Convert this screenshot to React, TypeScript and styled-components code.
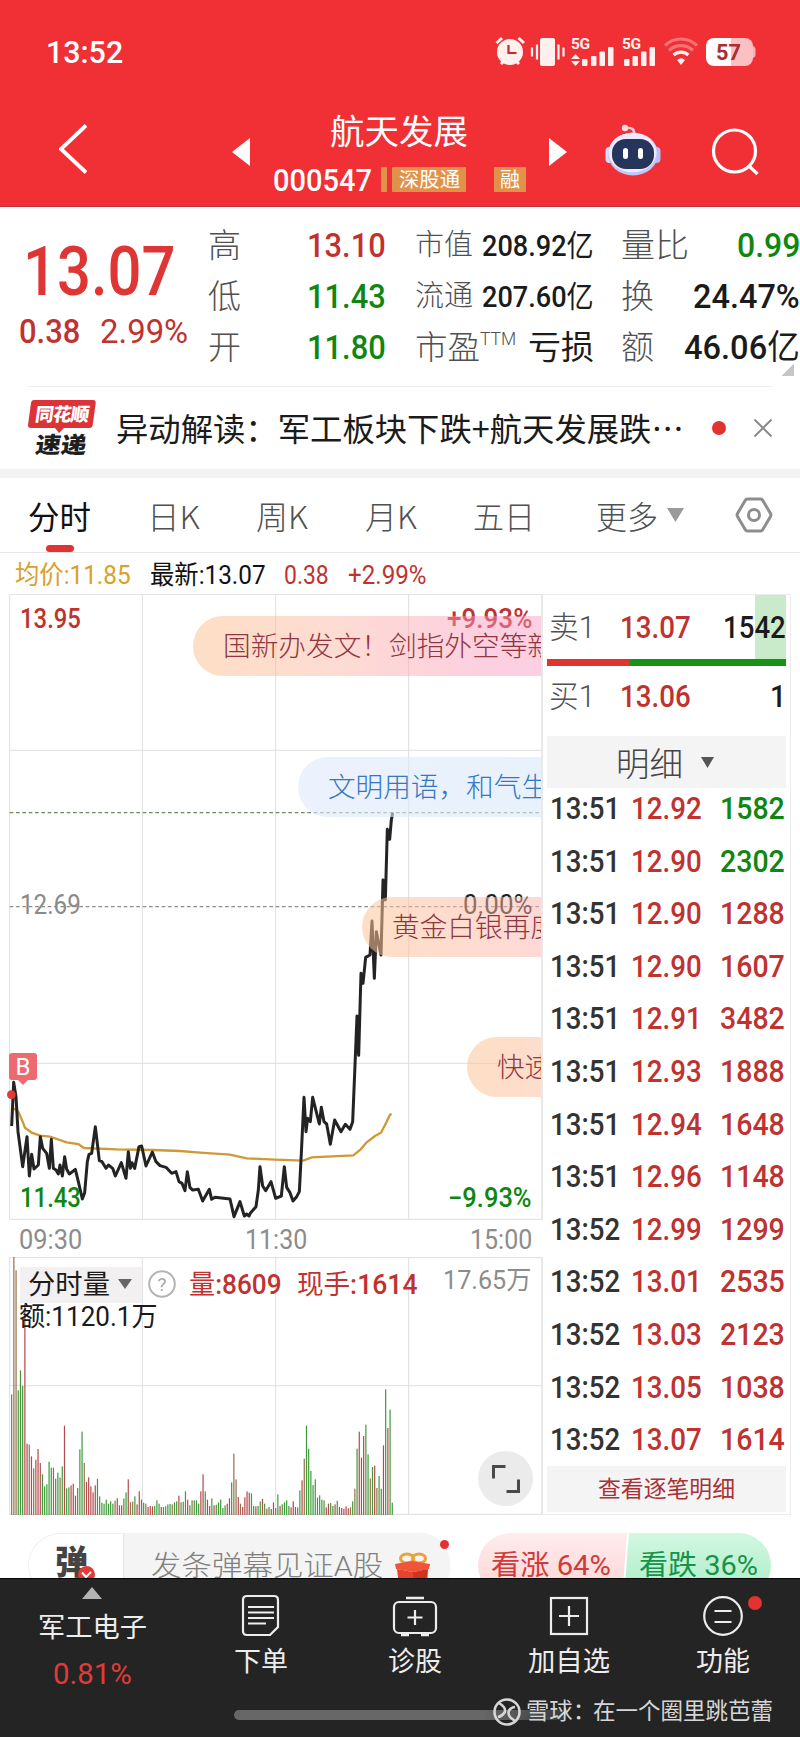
import React, { useLayoutEffect, useRef } from "react";
import styled, { createGlobalStyle } from "styled-components";

const RED = "#c0322f";
const GREEN = "#0f860f";
const INK = "#1b1b1b";
const LABEL = "#505050";
const GRID = "#dedede";

const GlobalStyle = createGlobalStyle`
  * {
    box-sizing: border-box;
  }
  body {
    margin: 0;
    background: #fff;
    font-family: Roboto, "Noto Sans CJK SC", sans-serif;
  }
  svg {
    display: block;
    flex: none;
  }
`;

const TextSlot = styled.span<{
  $width: number;
  $size: number;
  $color?: string;
  $weight?: number;
  $left?: number;
}>`
  display: flex;
  flex: none;
  align-items: center;
  width: ${(p) => p.$width}px;
  height: ${(p) => Math.round(p.$size * 1.2)}px;
  margin-left: ${(p) => p.$left ?? 0}px;
  font-size: ${(p) => p.$size}px;
  font-weight: ${(p) => p.$weight ?? 400};
  line-height: 1.2;
  color: ${(p) => p.$color ?? "inherit"};
`;

const TextInk = styled.span`
  flex: none;
  white-space: pre;
  transform-origin: 0 50%;
`;

const Han = styled.span`
  font-weight: 400;
`;

interface FitProps {
  w: number;
  size: number;
  color?: string;
  weight?: number;
  left?: number;
  children: React.ReactNode;
}

const Fit: React.FC<FitProps> = ({ w, size, color, weight, left, children }) => {
  const ref = useRef<HTMLSpanElement>(null);

  useLayoutEffect(() => {
    const el = ref.current;
    if (el && el.offsetWidth) {
      el.style.transform = `scaleX(${w / el.offsetWidth})`;
    }
  }, [w, size, children]);

  return (
    <TextSlot $width={w} $size={size} $color={color} $weight={weight} $left={left}>
      <TextInk ref={ref}>{children}</TextInk>
    </TextSlot>
  );
};

/* ---------- layout ---------- */

const Page = styled.main`
  width: 800px;
  height: 1737px;
  overflow: hidden;
  background: #fff;
`;

const Header = styled.header`
  height: 207px;
  background: #f03035;
  border-bottom: 1px solid #c23338;
  color: #fff;
`;

const StatusBar = styled.div`
  display: flex;
  align-items: center;
  height: 104px;
  padding-left: 46px;
`;

const StatusIcons = styled.div`
  margin: -2px 0 0 372px;
`;

const NavBar = styled.div`
  display: flex;
  height: 102px;
`;

const TitleBlock = styled.div`
  width: 276px;
  margin-left: 24px;
`;

const TitleLine = styled.div`
  display: flex;
  height: 54px;
  align-items: center;
  padding: 2px 0 0 55px;
`;

const CodeLine = styled.div`
  display: flex;
  height: 45px;
  margin-top: -1px;
  align-items: flex-start;
`;

const CodeText = styled.div`
  margin-top: 4px;
`;

const Tag = styled.span<{ $width: number; $left: number }>`
  display: flex;
  justify-content: center;
  align-items: center;
  width: ${(p) => p.$width}px;
  height: 25px;
  margin: 10px 0 0 ${(p) => p.$left}px;
  border-radius: 1px;
  background: #e0924b;
`;

const Quote = styled.section`
  display: flex;
  height: 179px;
`;

const LastPrice = styled.div`
  width: 208px;
  padding: 25px 0 0 20px;
  flex: none;
`;

const LastPriceRow = styled.div<{ $left: number; $height: number }>`
  display: flex;
  align-items: center;
  height: ${(p) => p.$height}px;
  padding-left: ${(p) => p.$left}px;
`;

const QuoteColumn = styled.div<{ $width: number }>`
  width: ${(p) => p.$width}px;
  flex: none;
  padding-top: 13px;
`;

const QuoteRow = styled.div`
  display: flex;
  justify-content: space-between;
  align-items: center;
  height: 51px;
  color: ${LABEL};
`;

const LabelGroup = styled.span`
  display: flex;
  align-items: flex-start;
`;

const Expand = styled.i`
  align-self: flex-end;
  flex: none;
  width: 13px;
  height: 13px;
  margin: 0 0 10px -19px;
  background: linear-gradient(135deg, transparent 50%, #c6c6c6 50%);
`;

const News = styled.section`
  display: flex;
  align-items: center;
  height: 91px;
  border-bottom: 9px solid #f3f3f3;
  color: ${INK};
`;

const Rule = styled.hr`
  width: 744px;
  height: 1px;
  margin: 0 0 0 28px;
  border: 0;
  background: #ececec;
`;

const NewsText = styled.div`
  margin: -2px 0 0 19px;
  font-family: "Noto Sans CJK SC", sans-serif;
`;

const Dot = styled.i<{ $size: number; $left?: number }>`
  flex: none;
  width: ${(p) => p.$size}px;
  height: ${(p) => p.$size}px;
  margin-left: ${(p) => p.$left ?? 0}px;
  border-radius: 50%;
  background: #e23330;
`;

const Tabs = styled.nav`
  display: flex;
  height: 75px;
  border-bottom: 1px solid #e6e6e6;
  color: ${LABEL};
  font-family: "Noto Sans CJK SC", sans-serif;
`;

const Tab = styled.div<{ $left: number; $active?: boolean }>`
  display: flex;
  flex-direction: column;
  align-items: center;
  justify-content: space-between;
  height: 74px;
  padding-top: 18px;
  margin-left: ${(p) => p.$left}px;

  &::after {
    content: "";
    width: 28px;
    height: 7px;
    border-radius: 4px;
    background: ${(p) => (p.$active ? "#e23330" : "transparent")};
  }
`;

const TabIcon = styled.div<{ $left: number; $top: number }>`
  margin: ${(p) => p.$top}px 0 0 ${(p) => p.$left}px;
`;

const Summary = styled.div`
  display: flex;
  align-items: center;
  width: 542px;
  height: 41px;
  padding: 5px 0 0 15px;
`;

const Market = styled.section`
  display: flex;
  height: 921px;
`;

const Charts = styled.div`
  width: 543px;
  flex: none;
`;

const Plot = styled.div<{ $height: number }>`
  position: relative;
  height: ${(p) => p.$height}px;
  overflow: hidden;
`;

const PlotSvg = styled.svg`
  position: absolute;
  inset: 0;
  width: 543px;
  height: 100%;
`;

const PlotLabels = styled.div`
  position: relative;
  display: flex;
  flex-direction: column;
  justify-content: space-between;
  height: 100%;
  padding: 9px 11px 6px 20px;
`;

const LabelRow = styled.div<{ $raise?: number }>`
  display: flex;
  justify-content: space-between;
  margin-top: -${(p) => p.$raise ?? 0}px;
`;

const Danmaku = styled.div<{ $x: number; $y: number; $tone?: "blue" }>`
  position: absolute;
  left: ${(p) => p.$x}px;
  top: ${(p) => p.$y}px;
  display: flex;
  align-items: center;
  width: 460px;
  height: 60px;
  padding: 2px 0 0 30px;
  border-radius: 30px;
  color: ${(p) => (p.$tone ? "#3577c0" : "#8f3640")};
  background: ${(p) =>
    p.$tone
      ? "linear-gradient(90deg, rgba(222, 233, 250, 0.6), rgba(210, 232, 250, 0.6))"
      : "linear-gradient(90deg, rgba(252, 196, 150, 0.55), rgba(252, 184, 166, 0.5) 30%, rgba(250, 150, 190, 0.46) 65%)"};
`;

const PlotEdge = styled.i`
  position: absolute;
  top: 0;
  right: 0;
  width: 2px;
  height: 100%;
  background: #e8e8e8;
`;

const BuyMark = styled.div`
  position: absolute;
  left: 9px;
  top: 459px;
  width: 28px;
  height: 27px;
  border-radius: 3px;
  background: #ec6a70;
  color: #fff;
  font-size: 24px;
  line-height: 28px;
  text-align: center;

  &::after {
    content: "";
    position: absolute;
    left: 9px;
    top: 27px;
    border: 5px solid transparent;
    border-top-color: #ec6a70;
  }
`;

const TimeAxis = styled.div`
  display: flex;
  justify-content: space-between;
  align-items: center;
  height: 37px;
  padding: 3px 11px 0 19px;
`;

const VolumeHead = styled.div`
  position: relative;
  display: flex;
  align-items: center;
  height: 36px;
  margin: 10px 0 0 20px;
`;

const VolumeMax = styled.div`
  margin: -8px 0 0 25px;
`;

const VolumeSelect = styled.div`
  display: flex;
  align-items: center;
  width: 122px;
  height: 36px;
  padding-left: 8px;
  background: rgba(241, 239, 239, 0.94);
`;

const VolumeAmount = styled.div`
  position: relative;
  margin: -2px 0 0 19px;
`;

const FullScreen = styled.div`
  position: absolute;
  left: 478px;
  top: 194px;
  display: flex;
  align-items: center;
  justify-content: center;
  width: 55px;
  height: 55px;
  border-radius: 50%;
  background: #ebebeb;
`;

const Book = styled.aside`
  width: 248px;
  height: 921px;
  padding-left: 4px;
  border: 1px solid #ececec;
  border-left: 0;
`;

const BookRow = styled.div<{ $height: number; $depth?: number }>`
  display: flex;
  align-items: center;
  width: 239px;
  height: ${(p) => p.$height}px;
  padding: 1px 0 0 2px;
  color: ${LABEL};
  background: linear-gradient(#c9ebc9, #c9ebc9) right / ${(p) => p.$depth ?? 0}px 100%
    no-repeat;
`;

const PushRight = styled.div`
  margin-left: auto;
`;

const RatioBar = styled.div`
  width: 239px;
  height: 7px;
  background: linear-gradient(90deg, #df3530 83px, #169316 83px);
`;

const TicksHead = styled.div`
  display: flex;
  align-items: center;
  width: 239px;
  height: 52px;
  margin-top: 10px;
  padding: 5px 0 0 69px;
  background: #f4f4f4;
`;

const Tick = styled.div`
  display: flex;
  align-items: center;
  width: 238px;
  height: 52.6px;
  padding-left: 3px;
`;

const Ticks = styled.div`
  margin-top: -6px;
`;

const TicksMore = styled.div`
  display: flex;
  align-items: center;
  justify-content: center;
  width: 239px;
  height: 46px;
  padding-top: 2px;
  background: #f4f4f5;
`;

const CommentBar = styled.div`
  display: flex;
  height: 63px;
  padding: 18px 0 0 28px;
  overflow: hidden;
`;

const DanmakuToggle = styled.div`
  position: relative;
  width: 96px;
  height: 65px;
  padding: 9px 0 0 26px;
  border: 1px solid #f0f0f0;
  border-right-color: #e6e6e6;
  border-radius: 33px 0 0 33px;
  flex: none;
`;

const ToggleBadge = styled.div`
  position: absolute;
  left: 49px;
  top: 32px;
`;

const CommentInput = styled.div`
  position: relative;
  display: flex;
  flex: none;
  width: 326px;
  height: 65px;
  padding: 17px 0 0 27px;
  border-radius: 0 30px 30px 0;
  background: #f4f4f4;
`;

const Gift = styled.div`
  margin: 2px 0 0 11px;
`;

const InputDot = styled.div`
  position: absolute;
  right: 1px;
  top: 7px;
`;

const Vote = styled.div<{ $up?: boolean }>`
  display: flex;
  flex: none;
  width: ${(p) => (p.$up ? 149 : 147)}px;
  height: 65px;
  padding: 16px 0 0 ${(p) => (p.$up ? 13 : 15)}px;
  margin-left: ${(p) => (p.$up ? 28 : -3)}px;
  border-radius: ${(p) => (p.$up ? "33px 0 0 33px" : "0 33px 33px 0")};
  clip-path: ${(p) =>
    p.$up
      ? "polygon(0 0, 100% 0, calc(100% - 5px) 100%, 0 100%)"
      : "polygon(5px 0, 100% 0, 100% 100%, 0 100%)"};
  background: ${(p) =>
    p.$up
      ? "linear-gradient(#feecec, #fcd3d3)"
      : "linear-gradient(#d2f7e1, #a9eec6)"};
`;

const BottomNav = styled.footer`
  height: 159px;
  border-top: 1px solid #050505;
  background: #242424;
  color: #ededed;
`;

const NavItems = styled.div`
  display: flex;
  height: 119px;
`;

const Sector = styled.div`
  display: flex;
  flex-direction: column;
  align-items: center;
  width: 184px;
  padding-top: 8px;
  flex: none;
`;

const SectorText = styled.div<{ $top: number }>`
  margin-top: ${(p) => p.$top}px;
`;

const NavItem = styled.div`
  position: relative;
  display: flex;
  flex-direction: column;
  align-items: center;
  width: 154px;
  padding-top: 15px;
  flex: none;
`;

const NavLabel = styled.div`
  margin-top: 8px;
`;

const NavDot = styled.div`
  position: absolute;
  left: 102px;
  top: 17px;
`;

const HomeRow = styled.div`
  display: flex;
  align-items: center;
  height: 30px;
  padding: 4px 0 0 234px;
`;

const HomeBar = styled.i`
  width: 332px;
  height: 10px;
  flex: none;
  border-radius: 5px;
  background: linear-gradient(90deg, #676767 75%, #3a3a3a);
`;

const Watermark = styled.div`
  display: flex;
  align-items: center;
  margin: -9px 0 0 -73px;
  padding-top: 3px;
  color: #d6d6d6;
`;

/* ---------- data ---------- */

const ticks: [string, string, string, boolean?][] = [
  ["13:51", "12.92", "1582", true],
  ["13:51", "12.90", "2302", true],
  ["13:51", "12.90", "1288"],
  ["13:51", "12.90", "1607"],
  ["13:51", "12.91", "3482"],
  ["13:51", "12.93", "1888"],
  ["13:51", "12.94", "1648"],
  ["13:51", "12.96", "1148"],
  ["13:52", "12.99", "1299"],
  ["13:52", "13.01", "2535"],
  ["13:52", "13.03", "2123"],
  ["13:52", "13.05", "1038"],
  ["13:52", "13.07", "1614"],
];

const priceLine =
  "35,918 41,787 48,830 54,935 68,1040 81,950 88,1068 95,1003 102,1047 115,1035 121,950 128,985 140,1000 148,1045 154,958 160,1045 168,1050 175,1062 180,1035 187,1068 194,1010 200,1048 208,1062 226,1048 235,1085 247,1137 254,1118 262,1025 267,1003 275,1000 286,920 298,1022 306,1025 318,1045 325,1035 338,1045 346,1068 364,1028 378,1075 385,995 391,1045 396,1028 404,1045 417,980 425,978 438,1038 457,996 468,1025 480,1037 498,1042 515,1060 528,1055 537,1085 546,1090 555,1112 562,1055 570,1103 578,1110 595,1108 608,1143 628,1108 635,1138 645,1132 690,1137 702,1190 720,1145 733,1188 740,1182 747,1188 752,1178 768,1160 775,1110 780,1040 788,1098 797,1112 813,1085 827,1135 844,1128 853,1040 860,1102 870,1118 879,1143 890,1130 898,1115 904,1000 912,832 918,935 923,895 931,905 938,832 958,912 964,862 972,905 980,912 991,973 1004,900 1023,935 1036,913 1050,928 1058,905 1064,760 1071,588 1076,706 1083,460 1089,490 1097,412 1110,405 1116,303 1123,475 1129,335 1143,405 1149,180 1156,240 1162,28 1169,58 1174,0 1178,-22";

const averageLine =
  "41,865 55,875 68,905 75,923 95,938 120,947 150,950 200,967 235,972 252,984 350,988 460,990 540,993 600,998 690,1004 740,1015 826,1019 910,1022 935,1012 980,1010 1060,1006 1082,988 1100,967 1125,948 1143,938 1160,905 1170,884 1175,882";

const volumeBase = 824;
const volumeTops = [
  462, 50, 90, 450, 390, 437, 190, 610, 613, 648, 684, 658, 626, 668, 702, 738,
  732, 664, 682, 682, 715, 697, 712, 678, 556, 744, 741, 735, 730, 766, 743, 627,
  574, 668, 725, 711, 738, 756, 735, 715, 768, 787, 790, 778, 790, 783, 790, 781,
  774, 795, 795, 774, 756, 717, 786, 784, 768, 792, 753, 778, 787, 790, 800, 797,
  798, 797, 780, 790, 800, 800, 798, 792, 791, 792, 786, 783, 766, 786, 784, 753,
  778, 795, 780, 780, 780, 790, 753, 702, 753, 778, 797, 774, 795, 793, 786, 778,
  803, 795, 790, 774, 726, 640, 717, 770, 790, 800, 771, 753, 757, 759, 797, 798,
  797, 783, 776, 790, 805, 800, 806, 786, 803, 762, 797, 792, 786, 780, 797, 801,
  783, 800, 801, 750, 720, 655, 556, 625, 692, 734, 717, 772, 765, 778, 780, 801,
  790, 788, 797, 792, 781, 800, 803, 805, 798, 804, 801, 783, 745, 625, 574, 652,
  587, 553, 642, 714, 680, 676, 743, 707, 745, 615, 447, 563, 508, 787,
];
// r = up, g = down, b = flat
const volumeTones =
  "bbbgggrrbrbrrrgggggbggbgrggrrrggg" +
  "brrrrrggggggggbrrrggrbbgrrggbrrrgggrggggbggrgbgrgbgggrrgrrgrggg" +
  "ggrrgbbrbrrrrggrggrgrgrrggrggggrrrbgrbgggggggggrrggrgrrrrrbgbgrrrggbgrbggrgr";
const toneColor: Record<string, string> = {
  r: "#b5494b",
  g: "#3f9a3a",
  b: "#94704a",
};

/* ---------- icons ---------- */

const SystemIcons = () => (
  <svg width="262" height="32" viewBox="0 0 262 32" fill="#fff0ee">
    <g>
      <circle cx="15" cy="17" r="13" />
      <path
        d="M1.500 8 7 3M29 8 23.500 3M6 29l4-4M24 29l-4-4"
        stroke="#fff0ee"
        strokeWidth="3"
      />
      <path d="M13.500 10v8h8" fill="none" stroke="#c4282c" strokeWidth="2.200" />
    </g>
    <g>
      <rect x="45" y="3" width="15" height="28" rx="2" />
      <path
        d="M42 9.500v15M37 12.500v9M63.500 9.500v15M68.500 12.500v9"
        stroke="#fff0ee"
        strokeWidth="2.200"
      />
    </g>
    <g>
      <text x="76" y="13.500" fontSize="15.500" fontWeight="700" textLength="19">
        5G
      </text>
      <path d="M80.500 19l4.500 5h-9zM80.500 31l4.500-5h-9z" />
      <rect x="87" y="24" width="5.500" height="7" rx="1" />
      <rect x="96" y="21" width="5.500" height="10" rx="1" />
      <rect x="104.500" y="16.500" width="5.500" height="14.500" rx="1" />
      <rect x="113" y="12" width="5.500" height="19" rx="1" />
    </g>
    <g>
      <text x="127" y="13.500" fontSize="15.500" fontWeight="700" textLength="19">
        5G
      </text>
      <rect x="129" y="24" width="5.500" height="7" rx="1" />
      <rect x="137.500" y="21" width="5.500" height="10" rx="1" />
      <rect x="146" y="16.500" width="5.500" height="14.500" rx="1" />
      <rect x="154.500" y="12" width="5.500" height="19" rx="1" />
    </g>
    <g fill="none" stroke="#fff0ee" strokeWidth="3.200">
      <path d="M170 10.500a23 23 0 0 1 32 0" opacity="0.350" />
      <path d="M174 15.500a17 17 0 0 1 24 0" opacity="0.350" />
      <path d="M178.500 20a11 11 0 0 1 15 0" />
      <path d="M182 25q4-3.500 8 0l-4 5z" fill="#fff0ee" stroke="none" />
    </g>
    <g>
      <path d="M219 3h17v28h-17a8 8 0 0 1-8-8V11a8 8 0 0 1 8-8z" fill="#fff" />
      <path d="M236 3h14a8 8 0 0 1 8 8v12a8 8 0 0 1-8 8h-14z" fill="#fdc0c2" />
      <path d="M258 11q2.500 1 2.500 3v6q0 2-2.500 3z" fill="#fdb0b3" />
      <text
        x="221"
        y="25"
        fontSize="22"
        fontWeight="700"
        fill="#a82f33"
        textLength="25"
        lengthAdjust="spacingAndGlyphs"
      >
        57
      </text>
    </g>
  </svg>
);

const Robot = () => (
  <svg width="56" height="54" viewBox="0 0 56 54">
    <path d="M21 5q9-1 8 6" fill="none" stroke="#f6c9d8" strokeWidth="2.500" />
    <circle cx="20" cy="5" r="3.200" fill="#fbdbe0" />
    <rect x="0.500" y="24" width="8" height="16" rx="4" fill="#d8dcff" />
    <rect x="47.500" y="24" width="8" height="16" rx="4" fill="#b9bff6" />
    <ellipse cx="28" cy="31" rx="25" ry="21.500" fill="#c3c6fa" />
    <ellipse cx="27.500" cy="29.500" rx="24" ry="19.800" fill="#efeaff" />
    <rect x="7" y="16" width="42" height="30" rx="14" fill="#26355c" />
    <rect x="18" y="25" width="5" height="11" rx="2.500" fill="#fff" />
    <rect x="33" y="25" width="5" height="11" rx="2.500" fill="#fff" />
  </svg>
);

const NavGlyphs = () => (
  <>
    <TabIcon $left={59} $top={20}>
      <svg width="28" height="50" viewBox="0 0 28 50" fill="none">
        <path d="M27 1.500 2 25l25 23.500" stroke="#fff" strokeWidth="3.800" />
      </svg>
    </TabIcon>
    <TabIcon $left={145} $top={34}>
      <svg width="19" height="28" viewBox="0 0 19 28" fill="#fff">
        <path d="M0 14 18 0v28z" />
      </svg>
    </TabIcon>
  </>
);

const NewsLogo = () => (
  <svg width="69" height="56" viewBox="0 0 69 56">
    <path
      d="M6 0h59q3 0 2.700 3l-3 22q-.500 3-3.500 3H36l-5 5-4-5H3q-3.500 0-3-3L3 3q.500-3 3-3z"
      fill="#dc3338"
    />
    <g
      fontFamily="Noto Sans CJK SC"
      fontWeight="900"
      fontSize="18.500"
      transform="skewX(-8)"
    >
      <text x="9.500" y="21" fill="#fff" textLength="54">
        同花顺
      </text>
      <text
        x="14"
        y="53"
        fontSize="22.500"
        fill="#1f1f1f"
        textLength="51"
        lengthAdjust="spacingAndGlyphs"
      >
        速递
      </text>
    </g>
  </svg>
);

const GiftIcon = () => (
  <svg width="38" height="34" viewBox="0 0 38 34">
    <g fill="none" stroke="#eca23a" strokeWidth="3">
      <ellipse cx="13" cy="6.500" rx="6.500" ry="4.500" />
      <ellipse cx="25" cy="6.500" rx="6.500" ry="4.500" />
    </g>
    <path d="M1 12 18 9l18 3-1 5-16 3-17-3z" fill="#f0553a" />
    <path d="M3 17l16 3v14H5z" fill="#e8432c" />
    <path d="M19 20l15-3-1 17H19z" fill="#d5331f" />
  </svg>
);

const OrderIcon = () => (
  <svg width="40" height="44" viewBox="0 0 40 44" fill="none" stroke="#ededed" strokeWidth="2.200">
    <path d="M6 2h27q4 0 4 4v27l-8 8H6q-4 0-4-4V6q0-4 4-4z" />
    <path d="M7 13h26M7 18.500h26M7 24h26M7 29.500h18" strokeWidth="1.900" />
  </svg>
);

const DiagnoseIcon = () => (
  <svg width="46" height="44" viewBox="0 0 46 44" fill="none" stroke="#ededed" strokeWidth="2.200">
    <path d="M14 4h18M9 41h8M29 41h8" strokeWidth="2.600" />
    <rect x="2" y="8" width="42" height="31" rx="5" />
    <path d="M23 16v15M15.500 23.500h15" />
  </svg>
);

const AddIcon = () => (
  <svg width="40" height="44" viewBox="0 0 40 44" fill="none" stroke="#ededed" strokeWidth="2.200">
    <rect x="2" y="4" width="36" height="36" />
    <path d="M20 12v20M10 22h20" />
  </svg>
);

const FunctionIcon = () => (
  <svg width="42" height="44" viewBox="0 0 42 44" fill="none" stroke="#ededed" strokeWidth="2.200">
    <circle cx="21" cy="22" r="18.800" />
    <path d="M12.500 17h17M12.500 28h17" />
  </svg>
);

const Caret: React.FC<{ size: number; height: number; color: string }> = ({
  size,
  height,
  color,
}) => (
  <svg width={size} height={height} viewBox="0 0 10 10" preserveAspectRatio="none" fill={color}>
    <path d="M0 0h10L5 10z" />
  </svg>
);

/* ---------- charts ---------- */

const PriceChart = () => (
  <PlotSvg viewBox="0 -678 1629 1878" fill="none">
    <path
      d="M29-677H1626M29-209H1626M29 730H1626M29 1198H1626M29-677V1198M427-677V1198M827-677V1198M1226-677V1198"
      stroke={GRID}
      strokeWidth="3"
    />
    <path d="M29 260H1626" stroke="#8d8d8d" strokeWidth="4" strokeDasharray="11 8" />
    <path d="M29-22H1626" stroke="#6f8a5c" strokeWidth="3.500" strokeDasharray="11 8" />
    <polyline points={averageLine} stroke="#cf9a35" strokeWidth="7" />
    <polyline points={priceLine} stroke="#232323" strokeWidth="9" strokeLinejoin="round" />
    <circle cx="34" cy="824" r="13" fill="#e23a35" />
  </PlotSvg>
);

const VolumeChart = () => (
  <PlotSvg viewBox="0 50 1629 774" fill="none">
    <path
      d="M29 52H1626M29 436H1626M29 822H1626M29 52V824M427 52V824M827 52V824M1226 52V824"
      stroke={GRID}
      strokeWidth="3"
    />
    {volumeTops.map((top, i) => (
      <rect
        key={i}
        x={33.2 + i * 6.6}
        y={top}
        width="3.600"
        height={volumeBase - top}
        fill={toneColor[volumeTones[i] ?? "g"]}
      />
    ))}
  </PlotSvg>
);

const App: React.FC = () => {
  return (
    <Page>
      <GlobalStyle />
      <Header>
        <StatusBar>
          <Fit w={77} size={32} weight={500}>13:52</Fit>
          <StatusIcons>
            <SystemIcons />
          </StatusIcons>
        </StatusBar>
        <NavBar>
          <NavGlyphs />
          <TitleBlock>
            <TitleLine>
              <Fit w={138} size={34}>航天发展</Fit>
            </TitleLine>
            <CodeLine>
              <CodeText>
                <Fit w={99} size={32} weight={500} left={-2}>000547</Fit>
              </CodeText>
              <Tag $width={6} $left={9} />
              <Tag $width={74} $left={5}>
                <Fit w={61} size={20}>深股通</Fit>
              </Tag>
              <Tag $width={32} $left={28}>
                <Fit w={20} size={20}>融</Fit>
              </Tag>
            </CodeLine>
          </TitleBlock>
          <TabIcon $left={-2} $top={34}>
            <svg width="19" height="28" viewBox="0 0 19 28" fill="#fff">
              <path d="M18 14 0 0v28z" />
            </svg>
          </TabIcon>
          <TabIcon $left={37} $top={19}>
            <Robot />
          </TabIcon>
          <TabIcon $left={50} $top={23}>
            <svg width="50" height="50" viewBox="0 0 50 50" fill="none">
              <circle cx="23.500" cy="24" r="21" stroke="#fff" strokeWidth="3.200" />
              <path d="M37.500 38.500 46.500 47" stroke="#fff" strokeWidth="3.200" />
            </svg>
          </TabIcon>
        </NavBar>
      </Header>

      <Quote>
        <LastPrice>
          <LastPriceRow $left={3} $height={82}>
            <Fit w={153} size={68} weight={500} color="#df3534">13.07</Fit>
          </LastPriceRow>
          <LastPriceRow $left={-1} $height={34}>
            <Fit w={61} size={34} color={RED} weight={500} left={-1}>0.38</Fit>
            <Fit w={88} size={34} color={RED} weight={450} left={20}>2.99%</Fit>
          </LastPriceRow>
        </LastPrice>
        <QuoteColumn $width={178}>
          <QuoteRow>
            <Fit w={33} size={33} weight={300}>高</Fit>
            <Fit w={79} size={34} color={RED} weight={500}>13.10</Fit>
          </QuoteRow>
          <QuoteRow>
            <Fit w={33} size={33} weight={300}>低</Fit>
            <Fit w={79} size={34} color={GREEN} weight={500}>11.43</Fit>
          </QuoteRow>
          <QuoteRow>
            <Fit w={33} size={33} weight={300}>开</Fit>
            <Fit w={79} size={34} color={GREEN} weight={500}>11.80</Fit>
          </QuoteRow>
        </QuoteColumn>
        <QuoteColumn $width={208}>
          <QuoteRow>
            <Fit w={58} size={29} weight={300} left={29}>市值</Fit>
            <Fit w={112} size={30} color={INK} weight={500}>208.92<Han>亿</Han></Fit>
          </QuoteRow>
          <QuoteRow>
            <Fit w={58} size={29} weight={300} left={29}>流通</Fit>
            <Fit w={112} size={30} color={INK} weight={500}>207.60<Han>亿</Han></Fit>
          </QuoteRow>
          <QuoteRow>
            <LabelGroup>
              <Fit w={65} size={33} weight={300} left={29}>市盈</Fit>
              <Fit w={36} size={19} weight={300}>TTM</Fit>
            </LabelGroup>
            <Fit w={66} size={33} color={INK}>亏损</Fit>
          </QuoteRow>
        </QuoteColumn>
        <QuoteColumn $width={206}>
          <QuoteRow>
            <Fit w={68} size={33} weight={300} left={27}>量比</Fit>
            <Fit w={63} size={34} color={GREEN} weight={500}>0.99</Fit>
          </QuoteRow>
          <QuoteRow>
            <Fit w={33} size={33} weight={300} left={27}>换</Fit>
            <Fit w={107} size={34} color={INK} weight={500}>24.47%</Fit>
          </QuoteRow>
          <QuoteRow>
            <Fit w={33} size={33} weight={300} left={27}>额</Fit>
            <Fit w={116} size={34} color={INK} weight={500}>46.06<Han>亿</Han></Fit>
          </QuoteRow>
        </QuoteColumn>
        <Expand />
      </Quote>
      <Rule />

      <News>
        <TabIcon $left={28} $top={0}>
          <NewsLogo />
        </TabIcon>
        <NewsText>
          <Fit w={568} size={32}>异动解读：军工板块下跌+航天发展跌…</Fit>
        </NewsText>
        <Dot $size={14} $left={28} />
        <TabIcon $left={28} $top={0}>
          <svg width="18" height="18" viewBox="0 0 18 18" stroke="#8c8c8c" strokeWidth="2">
            <path d="M.500.500l17 17M17.500.500l-17 17" />
          </svg>
        </TabIcon>
      </News>

      <Tabs>
        <Tab $left={28} $active>
          <Fit w={63} size={32} color="#111">分时</Fit>
        </Tab>
        <Tab $left={56}>
          <Fit w={53} size={32} weight={300}>日K</Fit>
        </Tab>
        <Tab $left={56}>
          <Fit w={52} size={32} weight={300}>周K</Fit>
        </Tab>
        <Tab $left={57}>
          <Fit w={52} size={32} weight={300}>月K</Fit>
        </Tab>
        <Tab $left={56}>
          <Fit w={62} size={32} weight={300}>五日</Fit>
        </Tab>
        <Tab $left={61}>
          <Fit w={62} size={32} weight={300}>更多</Fit>
        </Tab>
        <TabIcon $left={9} $top={30}>
          <Caret size={17} height={14} color="#9b9b9b" />
        </TabIcon>
        <TabIcon $left={51} $top={19}>
          <svg width="38" height="36" viewBox="0 0 38 36" fill="none" stroke="#8d8d8d" strokeWidth="3">
            <path
              d="M12.500 2h13q1.500 0 2.300 1.400L35.500 16.500q.800 1.500 0 3l-7.700 13q-.800 1.500-2.300 1.500h-13q-1.500 0-2.300-1.500L2.500 19.500q-.800-1.500 0-3l7.700-13.100Q11 2 12.500 2z"
            />
            <circle cx="19" cy="18" r="5.500" />
          </svg>
        </TabIcon>
      </Tabs>

      <Summary>
        <Fit w={116} size={26} color="#d9a02a">均价:11.85</Fit>
        <Fit w={116} size={26} color="#111" left={19}>最新:13.07</Fit>
        <Fit w={45} size={26} color={RED} weight={450} left={18}>0.38</Fit>
        <Fit w={79} size={26} color={RED} weight={450} left={19}>+2.99%</Fit>
      </Summary>

      <Market>
        <Charts>
          <Plot $height={626}>
            <PriceChart />
            <PlotLabels>
              <LabelRow>
                <Fit w={61} size={27} color={RED} weight={500}>13.95</Fit>
                <Fit w={85} size={27} color={RED} weight={500}>+9.93%</Fit>
              </LabelRow>
              <LabelRow $raise={6}>
                <Fit w={61} size={27} color="#8a8a8a" weight={450}>12.69</Fit>
                <Fit w={69} size={27} color="#222" weight={450}>0.00%</Fit>
              </LabelRow>
              <LabelRow>
                <Fit w={61} size={27} color={GREEN} weight={500}>11.43</Fit>
                <Fit w={84} size={27} color={GREEN} weight={500}>−9.93%</Fit>
              </LabelRow>
            </PlotLabels>
            <Danmaku $x={193} $y={22}>
              <Fit w={332} size={27} weight={300}>国新办发文！剑指外空等新</Fit>
            </Danmaku>
            <Danmaku $x={298} $y={163} $tone="blue">
              <Fit w={221} size={27} weight={300}>文明用语，和气生</Fit>
            </Danmaku>
            <Danmaku $x={362} $y={303}>
              <Fit w={166} size={27} weight={300}>黄金白银再度</Fit>
            </Danmaku>
            <Danmaku $x={467} $y={443}>
              <Fit w={55} size={27} weight={300}>快速</Fit>
            </Danmaku>
            <BuyMark>B</BuyMark>
            <PlotEdge />
          </Plot>
          <TimeAxis>
            <Fit w={63} size={27} color="#8c8c8c">09:30</Fit>
            <Fit w={62} size={27} color="#8c8c8c" left={-1}>11:30</Fit>
            <Fit w={62} size={27} color="#8c8c8c">15:00</Fit>
          </TimeAxis>
          <Plot $height={258}>
            <VolumeChart />
            <VolumeHead>
              <VolumeSelect>
                <Fit w={82} size={27} color="#1a1a1a">分时量</Fit>
                <TabIcon $left={8} $top={-2}>
                  <Caret size={14} height={10} color="#666" />
                </TabIcon>
              </VolumeSelect>
              <TabIcon $left={6} $top={-2}>
                <svg width="28" height="28" viewBox="0 0 28 28">
                  <circle cx="14" cy="14" r="12.800" fill="none" stroke="#b4b4b4" strokeWidth="2" />
                  <text x="14" y="21" fontSize="19" fill="#a8a8a8" textAnchor="middle">
                    ?
                  </text>
                </svg>
              </TabIcon>
              <Fit w={93} size={27} color={RED} weight={500} left={13}><Han>量</Han>:8609</Fit>
              <Fit w={121} size={27} color={RED} weight={500} left={15}><Han>现手</Han>:1614</Fit>
              <VolumeMax>
                <Fit w={88} size={26} color="#8c8c8c">17.65万</Fit>
              </VolumeMax>
            </VolumeHead>
            <VolumeAmount>
              <Fit w={139} size={27} color="#1a1a1a">额:1120.1万</Fit>
            </VolumeAmount>
            <FullScreen>
              <svg width="28" height="28" viewBox="0 0 28 28" fill="none" stroke="#4a4a4a" strokeWidth="3">
                <path d="M1.500 13.500V1.500h12M26.500 14.500v12h-12" />
              </svg>
            </FullScreen>
            <PlotEdge />
          </Plot>
        </Charts>

        <Book>
          <BookRow $height={64} $depth={31}>
            <Fit w={46} size={31} weight={300}>卖1</Fit>
            <Fit w={71} size={32} color={RED} weight={500} left={25}>13.07</Fit>
            <PushRight>
              <Fit w={63} size={32} color={INK} weight={500}>1542</Fit>
            </PushRight>
          </BookRow>
          <RatioBar />
          <BookRow $height={60}>
            <Fit w={46} size={31} weight={300}>买1</Fit>
            <Fit w={71} size={32} color={RED} weight={500} left={25}>13.06</Fit>
            <PushRight>
              <Fit w={16} size={32} color={INK} weight={500}>1</Fit>
            </PushRight>
          </BookRow>
          <TicksHead>
            <Fit w={67} size={33} weight={300} color="#444">明细</Fit>
            <TabIcon $left={18} $top={-5}>
              <Caret size={13} height={11} color="#555" />
            </TabIcon>
          </TicksHead>
          <Ticks>
            {ticks.map(([time, price, volume, down], i) => (
              <Tick key={i}>
                <Fit w={70} size={32} color="#333" weight={500}>{time}</Fit>
                <Fit w={71} size={32} color={RED} weight={500} left={11}>{price}</Fit>
                <PushRight>
                  <Fit w={65} size={32} color={down ? GREEN : RED} weight={500}>{volume}</Fit>
                </PushRight>
              </Tick>
            ))}
          </Ticks>
          <TicksMore>
            <Fit w={137} size={23} color="#a83235">查看逐笔明细</Fit>
          </TicksMore>
        </Book>
      </Market>

      <CommentBar>
        <DanmakuToggle>
          <Fit w={33} size={33} weight={900} color="#444">弹</Fit>
          <ToggleBadge>
            <svg width="17" height="17" viewBox="0 0 17 17" fill="none">
              <circle cx="8.500" cy="8.500" r="8.500" fill="#e23c36" />
              <path d="M4 6.500 8 11l5-5" stroke="#fff" strokeWidth="2" />
            </svg>
          </ToggleBadge>
        </DanmakuToggle>
        <CommentInput>
          <Fit w={232} size={28.5} weight={300} color="#808080">发条弹幕见证A股</Fit>
          <Gift>
            <GiftIcon />
          </Gift>
          <InputDot>
            <Dot as="div" $size={9} />
          </InputDot>
        </CommentInput>
        <Vote $up>
          <Fit w={120} size={28} color="#d23a3a">看涨 64%</Fit>
        </Vote>
        <Vote>
          <Fit w={119} size={28} color="#17924a">看跌 36%</Fit>
        </Vote>
      </CommentBar>

      <BottomNav>
        <NavItems>
          <Sector>
            <svg width="20" height="12" viewBox="0 0 20 12" fill="#b4b4b4">
              <path d="M10 0l10 12H0z" />
            </svg>
            <SectorText $top={13}>
              <Fit w={109} size={27}>军工电子</Fit>
            </SectorText>
            <SectorText $top={13}>
              <Fit w={79} size={29} color="#e23a38">0.81%</Fit>
            </SectorText>
          </Sector>
          <NavItem>
            <OrderIcon />
            <NavLabel>
              <Fit w={54} size={27}>下单</Fit>
            </NavLabel>
          </NavItem>
          <NavItem>
            <DiagnoseIcon />
            <NavLabel>
              <Fit w={54} size={27}>诊股</Fit>
            </NavLabel>
          </NavItem>
          <NavItem>
            <AddIcon />
            <NavLabel>
              <Fit w={82} size={27}>加自选</Fit>
            </NavLabel>
          </NavItem>
          <NavItem>
            <FunctionIcon />
            <NavLabel>
              <Fit w={54} size={27}>功能</Fit>
            </NavLabel>
            <NavDot>
              <Dot as="div" $size={14} />
            </NavDot>
          </NavItem>
        </NavItems>
        <HomeRow>
          <HomeBar />
          <Watermark>
            <svg width="28" height="28" viewBox="0 0 28 28" fill="none" stroke="#d6d6d6" strokeWidth="2.600">
              <circle cx="14" cy="14" r="12.500" />
              <path d="M6 5q8 5 5.500 9.500Q9.500 18 5 19M22 9q-6 1-6.500 5.500Q15 19 22 23" />
            </svg>
            <Fit w={70} size={23} left={5}>雪球：</Fit>
            <Fit w={180} size={23} left={-3}>在一个圈里跳芭蕾</Fit>
          </Watermark>
        </HomeRow>
      </BottomNav>
    </Page>
  );
};

export default App;
